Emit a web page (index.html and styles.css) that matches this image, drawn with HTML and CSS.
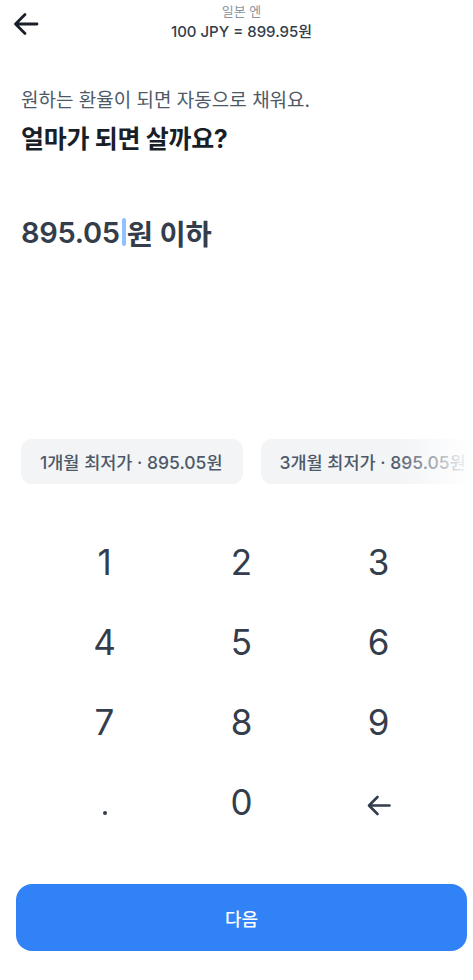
FILE: index.html
```html
<!DOCTYPE html>
<html lang="ko">
<head>
<meta charset="utf-8">
<title>일본 엔</title>
<link rel="stylesheet" href="styles.css">
</head>
<body>
<div class="page">
  <header class="topbar">
    <button class="back" aria-label="뒤로">
      <svg width="26" height="24" viewBox="0 0 26 24"><path d="M24 12H3M12 2.5L2.5 12L12 21.5" fill="none" stroke="#191f28" stroke-width="2.8" stroke-linecap="round" stroke-linejoin="round"/></svg>
    </button>
    <div class="title">
      <div class="title-sub">일본 엔</div>
      <div class="title-main">100 JPY = 899.95원</div>
    </div>
    <div class="spacer"></div>
  </header>

  <section class="intro">
    <p class="subtitle">원하는 환율이 되면 자동으로 채워요.</p>
    <h1 class="heading">얼마가 되면 살까요?</h1>
  </section>

  <div class="amount"><span class="num">895.05</span><span class="cursor"></span><span class="unit">원 이하</span></div>

  <div class="chips">
    <div class="chip">1개월 최저가 · 895.05원</div>
    <div class="chip">3개월 최저가 · 895.05원</div>
  </div>

  <div class="keypad">
    <div class="key">1</div>
    <div class="key">2</div>
    <div class="key">3</div>
    <div class="key">4</div>
    <div class="key">5</div>
    <div class="key">6</div>
    <div class="key">7</div>
    <div class="key">8</div>
    <div class="key">9</div>
    <div class="key dot"><span class="dot-mark"></span></div>
    <div class="key">0</div>
    <div class="key del">
      <svg width="24" height="21" viewBox="0 0 24 21"><path d="M22.5 10.5H3M10.5 2L2 10.5L10.5 19" fill="none" stroke="#333d4b" stroke-width="2.6" stroke-linecap="round" stroke-linejoin="round"/></svg>
    </div>
  </div>

  <button class="next">다음</button>
</div>
</body>
</html>
```

FILE: styles.css
```css
* { box-sizing: border-box; }
html, body {
  margin: 0;
  padding: 0;
  background: #fff;
  overflow: hidden;
}
body {
  font-family: Inter, "Noto Sans CJK KR", sans-serif;
  color: #191f28;
}
.page {
  width: 483px;
  height: 980px;
  display: flex;
  flex-direction: column;
}
.topbar {
  display: grid;
  grid-template-columns: 60px 1fr 60px;
  height: 45px;
}
.back {
  border: 0;
  background: none;
  padding: 0;
  margin: 12px 0 0 13px;
  width: 26px;
  height: 24px;
  display: flex;
}
.title {
  text-align: center;
  padding-top: 3px;
}
.title-sub {
  font-size: 13px;
  line-height: 16px;
  color: #8b95a1;
}
.title-main {
  margin-top: 3px;
  font-size: 15px;
  line-height: 20px;
  color: #333d4b;
  font-weight: 500;
}
.intro {
  padding-left: 21px;
  margin-top: 44px;
}
.subtitle {
  margin: 0;
  font-size: 19px;
  line-height: 24px;
  color: #4e5968;
}
.heading {
  margin: 11px 0 0;
  font-size: 25px;
  line-height: 30px;
  font-weight: 700;
  color: #191f28;
  letter-spacing: -0.3px;
}
.amount {
  margin-top: 58px;
  padding-left: 21px;
  display: flex;
  align-items: center;
  height: 40px;
  font-size: 29px;
  font-weight: 600;
  color: #333d4b;
  letter-spacing: -0.3px;
}
.unit {
  font-size: 28.5px;
  font-weight: 600;
}
.cursor {
  width: 4px;
  height: 28px;
  border-radius: 2px;
  background: #90c2ff;
  margin: 0 1px 0 2px;
}
.chips {
  position: relative;
  margin-top: 187px;
  padding-left: 21px;
  display: flex;
  gap: 18px;
  overflow: hidden;
  white-space: nowrap;
}
.chips::after {
  content: "";
  position: absolute;
  top: 0;
  bottom: 0;
  left: 395px;
  width: 88px;
  background: linear-gradient(to right, rgba(255,255,255,0), #fff 88%);
}
.chip {
  flex: none;
  height: 45px;
  padding: 0 20px 0 19px;
  border-radius: 11px;
  background: #f2f4f6;
  color: #4e5968;
  font-size: 17.5px;
  font-weight: 500;
  display: flex;
  align-items: center;
}
.keypad {
  margin-top: 38px;
  padding: 0 36px;
  display: grid;
  grid-template-columns: repeat(3, 1fr);
  grid-auto-rows: 80px;
}
.key {
  display: flex;
  align-items: center;
  justify-content: center;
  font-size: 35px;
  font-weight: 400;
  color: #333d4b;
}
.dot-mark {
  width: 4px;
  height: 4px;
  border-radius: 50%;
  background: #333d4b;
  margin-top: 22px;
}
.del svg {
  margin-top: 6px;
}
.next {
  margin: 42px 16px 0;
  height: 67px;
  border: 0;
  border-radius: 16px;
  background: #3182f6;
  color: #fff;
  font-family: Inter, "Noto Sans CJK KR", sans-serif;
  font-size: 18px;
  font-weight: 500;
}
```
